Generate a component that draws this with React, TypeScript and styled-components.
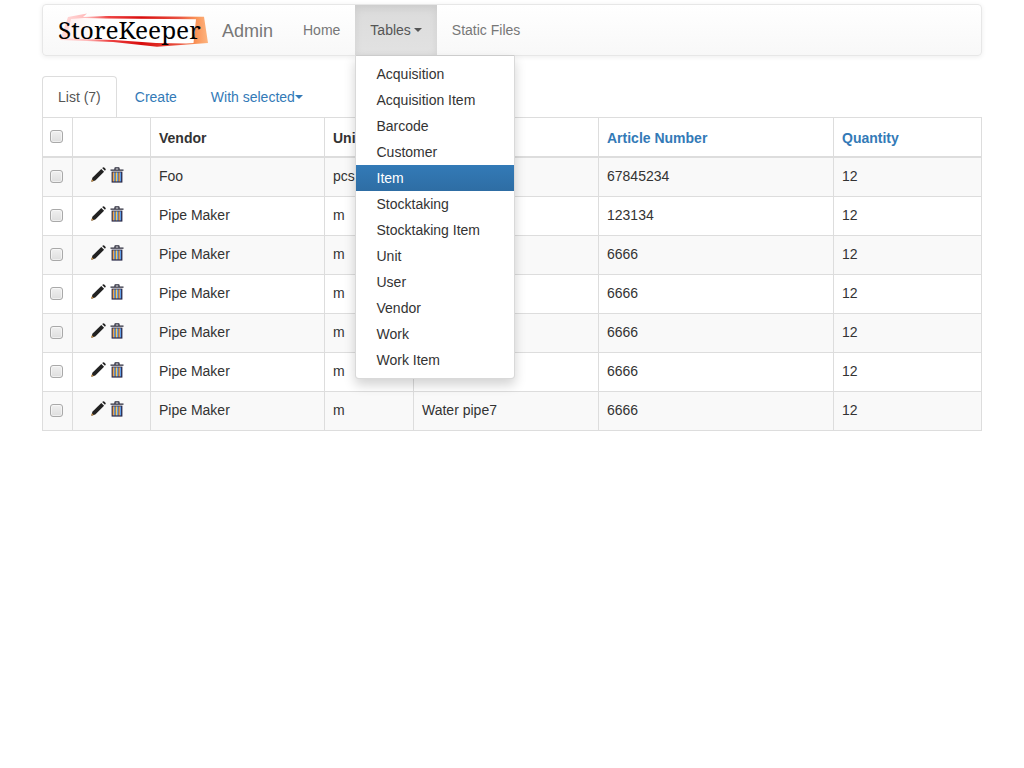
import React from 'react';
import styled, { createGlobalStyle } from 'styled-components';

const Global = createGlobalStyle`
  html, body { margin: 0; padding: 0; background: #fff; }
  body { font-family: "Liberation Sans", Arial, sans-serif; font-size: 14px; line-height: 20px; color: #333; }
  * { box-sizing: border-box; }
`;
const Container = styled.div`
  width: 940px;
  margin: 4px auto 0;
  position: relative;
`;
const Navbar = styled.nav`
  height: 52px;
  display: flex;
  border: 1px solid #e7e7e7;
  border-radius: 4px;
  background: linear-gradient(to bottom, #fff 0%, #f8f8f8 100%);
  box-shadow: inset 0 1px 0 rgba(255,255,255,.15), 0 1px 5px rgba(0,0,0,.075);
  margin-bottom: 20px;
`;
const Brand = styled.div`
  display: flex;
  align-items: center;
  padding-left: 15px;
  width: 245px;
`;
const LogoBox = styled.div`
  position: relative;
  width: 150px;
  height: 34px;
  margin-right: 14px;
  flex: none;
`;
const LogoText = styled.span`
  position: absolute;
  left: 0;
  top: 0;
  line-height: 34px;
  font-family: "Noto Serif", "DejaVu Serif", "Liberation Serif", serif;
  font-size: 24.4px;
  color: #000;
  white-space: nowrap;
`;
const BrandName = styled.span`
  font-size: 18px;
  color: #777;
  position: relative;
  top: 1px;
`;
const NavItem = styled.div<{ $open?: boolean }>`
  padding: 15px;
  height: 50px;
  color: ${p => (p.$open ? '#555' : '#777')};
  background: ${p => (p.$open ? 'linear-gradient(to bottom, #dbdbdb 0%, #e2e2e2 100%)' : 'transparent')};
  box-shadow: ${p => (p.$open ? 'inset 0 3px 9px rgba(0,0,0,.075)' : 'none')};
  display: flex;
  align-items: flex-start;
`;
const Caret = styled.span<{ $gap?: number }>`
  display: inline-block;
  width: 0;
  height: 0;
  border-top: 4px solid currentColor;
  border-left: 4px solid transparent;
  border-right: 4px solid transparent;
  margin: 8px 0 0 ${p => p.$gap ?? 0}px;
`;
const Menu = styled.ul`
  position: absolute;
  top: 51px;
  left: 313px;
  width: 160px;
  height: 324px;
  margin: 0;
  padding: 5px 0;
  list-style: none;
  background: #fff;
  border: 1px solid rgba(0,0,0,.15);
  border-top-color: #ccc;
  border-radius: 0 0 4px 4px;
  box-shadow: 0 6px 12px rgba(0,0,0,.175);
  z-index: 10;
`;
const MenuItem = styled.li<{ $active?: boolean }>`
  height: 26px;
  padding: 3px 20px 3px 20.5px;
  white-space: nowrap;
  color: ${p => (p.$active ? '#fff' : '#333')};
  background: ${p => (p.$active ? 'linear-gradient(to bottom, #337ab7 0%, #2e6da4 100%)' : 'transparent')};
`;
const Tabs = styled.div`
  display: flex;
  height: 41px;
`;
const Tab = styled.div<{ $active?: boolean }>`
  height: 41px;
  padding: 10px 15px 0;
  margin-right: 2px;
  border: 1px solid ${p => (p.$active ? '#ddd' : 'transparent')};
  border-bottom: 0;
  border-radius: 4px 4px 0 0;
  color: ${p => (p.$active ? '#555' : '#337ab7')};
  display: flex;
  align-items: flex-start;
`;
const Table = styled.table`
  width: 939px;
  table-layout: fixed;
  border-collapse: collapse;
  border: 1px solid #ddd;
`;
const Th = styled.th<{ $link?: boolean }>`
  height: 39px;
  padding: 8px;
  text-align: left;
  vertical-align: bottom;
  font-weight: 700;
  border: 1px solid #ddd;
  border-bottom-width: 2px;
  color: ${p => (p.$link ? '#337ab7' : '#333')};
`;
const Row = styled.tr<{ $odd: boolean }>`
  background: ${p => (p.$odd ? '#f9f9f9' : '#fff')};
  &:first-child td { height: 40px; }
`;
const Td = styled.td`
  height: 39px;
  padding: 8px;
  vertical-align: top;
  border: 1px solid #ddd;
`;
const CheckCell = styled(Td)`
  padding: 12px 0 0 7px;
`;
const CheckHead = styled(Th)`
  padding: 12px 0 0 7px;
  vertical-align: top;
`;
const CheckBox = styled.span`
  display: block;
  width: 13px;
  height: 13px;
  border: 1px solid #a9a9a9;
  border-radius: 3px;
  background: linear-gradient(to bottom, #f0f0f0, #dedede);
  box-shadow: inset 0 0 0 1px rgba(255,255,255,.5);
`;
const Actions = styled.div`
  display: flex;
  gap: 4px;
  padding: 1px 0 0 10px;
`;

const Pencil = () => (
  <svg width="15" height="15" viewBox="0 0 14 14">
    <path d="M0.3 13.7 L1.3 10 L9.6 1.8 L12.2 4.4 L4 12.6 Z" fill="#222" />
    <path d="M0.3 13.7 L0.9 11.4 L2.6 13.1 Z" fill="#c68a3c" />
    <path d="M10.4 1 L11.2 0.4 Q11.8 0 12.3 0.5 L13.5 1.7 Q14 2.2 13.6 2.8 L13 3.6 Z" fill="#222" />
  </svg>
);
const Trash = () => (
  <svg width="14" height="16" viewBox="0 0 14 16">
    <path d="M0.5 2.4 H4.4 V1.2 Q4.4 0.3 5.3 0.3 H8.7 Q9.6 0.3 9.6 1.2 V2.4 H13.5 V3.8 H0.5 Z M5.6 1.4 V2.4 H8.4 V1.4 Z" fill="#2a2a3a" fillRule="evenodd" />
    <rect x="1.6" y="4.6" width="10.8" height="11" fill="#2a2a4a" />
    <rect x="2.7" y="5.4" width="1.4" height="9" fill="#f0a550" />
    <rect x="4.1" y="5.4" width="1.2" height="9" fill="#5f9de8" />
    <rect x="5.6" y="5.4" width="1.4" height="9" fill="#f2cc62" />
    <rect x="7" y="5.4" width="1.2" height="9" fill="#5f9de8" />
    <rect x="8.5" y="5.4" width="1.4" height="9" fill="#f0a550" />
    <rect x="9.9" y="5.4" width="1.2" height="9" fill="#5f9de8" />
  </svg>
);
const LogoStroke = () => (
  <svg width="150" height="34" viewBox="0 0 150 34" style={{ position: 'absolute', left: 0, top: 0 }}>
    <defs>
      <linearGradient id="lg" x1="0" x2="1" y1="0" y2="0">
        <stop offset="0" stopColor="#fdd" />
        <stop offset="0.18" stopColor="#fbb" />
        <stop offset="0.33" stopColor="#e44" />
        <stop offset="0.55" stopColor="#d80c0c" />
        <stop offset="0.8" stopColor="#e85040" />
        <stop offset="0.92" stopColor="#fa9458" />
        <stop offset="1" stopColor="#fdb580" />
      </linearGradient>
      <linearGradient id="lw" x1="0" x2="1" y1="0" y2="0">
        <stop offset="0" stopColor="#fee" />
        <stop offset="0.25" stopColor="#fff" />
        <stop offset="1" stopColor="#fff" />
      </linearGradient>
    </defs>
    <path d="M10 4 L29 0.5 L25 4 L48 3 L146 3.7 L150 30 L99 33.7 L55 29 L2 27 Z" fill="url(#lg)" />
    <path d="M13 6 L26 5 L48 5.5 L138 6.3 L135.5 30 L128 30.5 L98 30 L56 27 L8 25.5 Z" fill="url(#lw)" />
  </svg>
);

const menu = ['Acquisition', 'Acquisition Item', 'Barcode', 'Customer', 'Item', 'Stocktaking', 'Stocktaking Item', 'Unit', 'User', 'Vendor', 'Work', 'Work Item'];
const rows = [
  ['Foo', 'pcs', 'Water pipe1', '67845234'],
  ['Pipe Maker', 'm', 'Water pipe2', '123134'],
  ['Pipe Maker', 'm', 'Water pipe3', '6666'],
  ['Pipe Maker', 'm', 'Water pipe4', '6666'],
  ['Pipe Maker', 'm', 'Water pipe5', '6666'],
  ['Pipe Maker', 'm', 'Water pipe6', '6666'],
  ['Pipe Maker', 'm', 'Water pipe7', '6666'],
];

export default function App() {
  return (
    <>
      <Global />
      <Container>
        <Navbar>
          <Brand>
            <LogoBox>
              <LogoStroke />
              <LogoText>StoreKeeper</LogoText>
            </LogoBox>
            <BrandName>Admin</BrandName>
          </Brand>
          <NavItem>Home</NavItem>
          <NavItem $open>Tables<Caret $gap={3} /></NavItem>
          <NavItem>Static Files</NavItem>
        </Navbar>
        <Menu>
          {menu.map(m => <MenuItem key={m} $active={m === 'Item'}>{m}</MenuItem>)}
        </Menu>
        <Tabs>
          <Tab $active>List (7)</Tab>
          <Tab>Create</Tab>
          <Tab>With selected<Caret /></Tab>
        </Tabs>
        <Table>
          <colgroup>
            <col style={{ width: 30 }} />
            <col style={{ width: 78 }} />
            <col style={{ width: 174 }} />
            <col style={{ width: 89 }} />
            <col style={{ width: 185 }} />
            <col style={{ width: 235 }} />
            <col style={{ width: 148 }} />
          </colgroup>
          <thead>
            <tr>
              <CheckHead><CheckBox /></CheckHead>
              <Th />
              <Th>Vendor</Th>
              <Th>Unit</Th>
              <Th $link>Name</Th>
              <Th $link>Article Number</Th>
              <Th $link>Quantity</Th>
            </tr>
          </thead>
          <tbody>
            {rows.map((r, i) => (
              <Row key={i} $odd={i % 2 === 0}>
                <CheckCell><CheckBox /></CheckCell>
                <Td><Actions><Pencil /><Trash /></Actions></Td>
                <Td>{r[0]}</Td>
                <Td>{r[1]}</Td>
                <Td>{r[2]}</Td>
                <Td>{r[3]}</Td>
                <Td>12</Td>
              </Row>
            ))}
          </tbody>
        </Table>
      </Container>
    </>
  );
}
